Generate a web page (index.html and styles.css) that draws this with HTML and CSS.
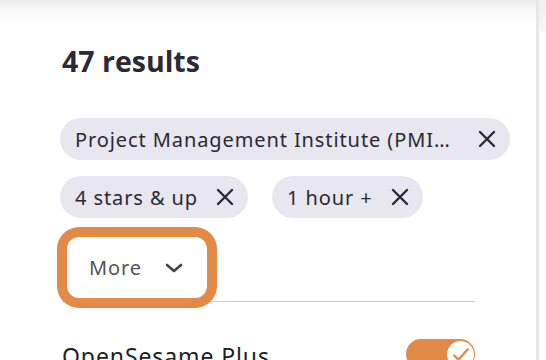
FILE: index.html
```html
<!DOCTYPE html>
<html>
<head>
<meta charset="utf-8">
<link rel="stylesheet" href="styles.css">
</head>
<body>
<div class="page">
  <main class="main">
    <h1 class="title">47 results</h1>
    <div class="chips">
      <span class="chip chip-wide">
        <span class="chip-text">Project Management Institute (PMI…</span>
        <svg class="x" viewBox="0 0 20 20"><path d="M3 3 L17 17 M17 3 L3 17"/></svg>
      </span>
      <span class="chip">
        <span class="chip-text">4 stars &amp; up</span>
        <svg class="x" viewBox="0 0 20 20"><path d="M3 3 L17 17 M17 3 L3 17"/></svg>
      </span>
      <span class="chip">
        <span class="chip-text">1 hour +</span>
        <svg class="x" viewBox="0 0 20 20"><path d="M3 3 L17 17 M17 3 L3 17"/></svg>
      </span>
    </div>
    <div class="more-row">
      <button class="more">
        <span>More</span>
        <svg class="chev" viewBox="0 0 18 10"><path d="M2 2 L9 8 L16 2"/></svg>
      </button>
    </div>
    <div class="option">
      <span class="option-label">OpenSesame Plus</span>
      <span class="toggle">
        <span class="knob">
          <svg viewBox="0 0 26 26"><path d="M7 14 L11 18 L20 8"/></svg>
        </span>
      </span>
    </div>
  </main>
  <div class="divider"></div>
  <aside class="side"><div class="side-top"></div></aside>
</div>
</body>
</html>
```

FILE: styles.css
```css
* { box-sizing: border-box; }
html, body { margin: 0; padding: 0; background: #fff; }
body { font-family: "Noto Sans", "Open Sans", sans-serif; color: #2a2a33; }

.page {
  display: flex;
  width: 546px;
  height: 360px;
  overflow: hidden;
}

.main {
  width: 536px;
  flex: none;
  padding: 45px 0 0 62px;
  background: linear-gradient(to bottom, #ebebeb 0px, #f6f6f6 8px, #ffffff 22px);
}

.title {
  margin: 0;
  font-family: "Open Sans", sans-serif;
  font-weight: 700;
  font-size: 28.5px;
  line-height: 32px;
  color: #2a2a35;
}

.chips {
  margin: 41px 0 0 -2px;
  display: flex;
  flex-wrap: wrap;
  column-gap: 24px;
  row-gap: 16px;
  width: 460px;
}

.chip {
  display: inline-flex;
  align-items: center;
  height: 42px;
  padding: 0 13px 0 15px;
  gap: 17px;
  background: #e8e6ee;
  border-radius: 21px;
  font-size: 20px;
  letter-spacing: 0.9px;
  color: #2a2a33;
  white-space: nowrap;
}

.chip-wide { width: 450px; }

.x {
  width: 20px;
  height: 20px;
  flex: none;
  fill: none;
  stroke: #2a2a33;
  stroke-width: 2.4;
  stroke-linecap: round;
}

.chip-wide .x { margin-left: auto; }

.more-row {
  position: relative;
  margin-top: 19px;
  width: 413px;
  height: 65px;
  border-bottom: 1px solid #cfcfcf;
}

.more {
  position: relative;
  z-index: 1;
  margin-left: 5px;
  width: 140px;
  height: 61px;
  display: flex;
  align-items: center;
  padding: 0 0 0 22px;
  gap: 23px;
  border: none;
  border-radius: 12px;
  background: #fff;
  box-shadow: 0 0 0 10px #e38a47;
  font-family: inherit;
  font-size: 20px;
  letter-spacing: 0.9px;
  color: #555;
}

.chev {
  width: 18px;
  height: 10px;
  fill: none;
  stroke: #444;
  stroke-width: 2.6;
  stroke-linecap: round;
  stroke-linejoin: round;
}

.option {
  margin-top: 37px;
  width: 413px;
  display: flex;
  justify-content: space-between;
  align-items: flex-start;
}

.option-label {
  font-size: 23px;
  letter-spacing: 0.9px;
  line-height: 30px;
  color: #222;
  margin-top: 2px;
}

.toggle {
  width: 69px;
  height: 30px;
  border-radius: 15px;
  background: #e38a47;
  display: flex;
  justify-content: flex-end;
  padding: 2px 1px;
}

.knob {
  width: 27px;
  height: 27px;
  border-radius: 50%;
  background: #fff;
}

.knob svg {
  width: 27px;
  height: 27px;
  fill: none;
  stroke: #e38a47;
  stroke-width: 2.2;
  stroke-linecap: round;
  stroke-linejoin: round;
}

.divider {
  width: 3px;
  flex: none;
  background: #e8e8e8;
}

.side {
  flex: 1;
  background: #fff;
}

.side-top {
  height: 32px;
  background: linear-gradient(to bottom, #f0f0f0, #f7f7f7);
}
```
